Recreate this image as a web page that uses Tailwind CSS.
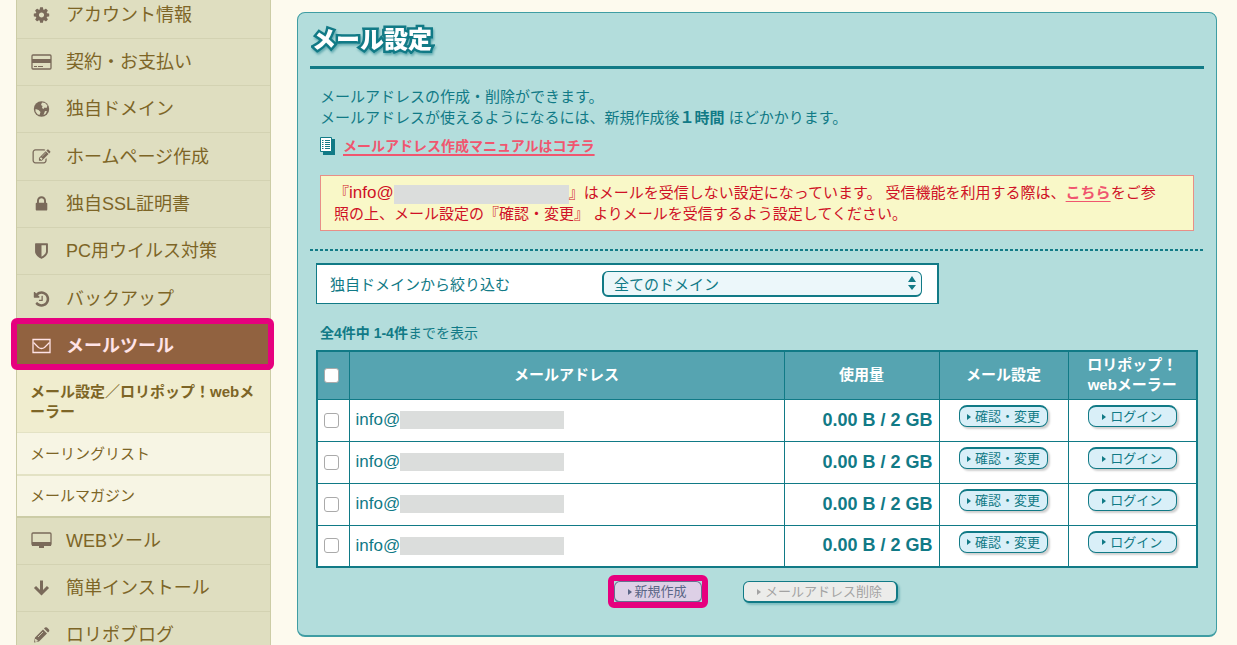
<!DOCTYPE html>
<html lang="ja">
<head>
    <meta charset="UTF-8">
    <meta name="viewport" content="width=device-width, initial-scale=1.0">
    <title>メール設定</title>
    <script src="https://cdn.jsdelivr.net/npm/@tailwindcss/browser@4"></script>
</head>
<body class="h-screen overflow-hidden bg-[#fdfaee] font-['Liberation_Sans','Noto_Sans_CJK_JP',sans-serif] text-[15px] text-[#117a86]">

<div class="flex items-start gap-[26px] pl-4 pr-5">

    <!-- Sidebar -->
    <nav class="-mt-2 w-[255px] shrink-0 border-x border-[#cccca6] bg-[#dfdec0] text-lg text-[#7d6526]">
        <a href="#" class="flex h-[47px] items-center gap-[14px] border-b border-[#d3d2b2] pl-[14px]">
            <svg class="h-[18px] w-[21px] shrink-0 fill-[#7a6a5a]" viewBox="0 0 1792 1792"><path d="M1152 896q0-106-75-181t-181-75-181 75-75 181 75 181 181 75 181-75 75-181zm512-109v222q0 12-8 23t-20 13l-185 28q-19 54-39 91 35 50 107 138 10 12 10 25t-9 23q-27 37-99 108t-94 71q-12 0-26-9l-138-108q-44 23-91 38-16 136-29 186-7 28-36 28h-222q-14 0-24.5-8.5t-11.5-21.5l-28-184q-49-16-90-37l-141 107q-10 9-25 9-14 0-25-11-126-114-165-168-7-10-7-23 0-12 8-23 15-21 51-66.5t54-70.5q-27-50-41-99l-183-27q-13-2-21-12.5t-8-23.5v-222q0-12 8-23t19-13l186-28q14-46 39-92-40-57-107-138-10-12-10-24 0-10 9-23 26-36 98.5-107.5t94.5-71.5q13 0 26 10l138 107q44-23 91-38 16-136 29-186 7-28 36-28h222q14 0 24.5 8.5t11.5 21.5l28 184q49 16 90 37l142-107q9-9 24-9 13 0 25 10 129 119 165 170 7 8 7 22 0 12-8 23-15 21-51 66.5t-54 70.5q26 50 41 98l183 28q13 2 21 12.5t8 23.5z"/></svg>
            アカウント情報
        </a>
        <a href="#" class="flex h-[47px] items-center gap-[14px] border-b border-[#d3d2b2] pl-[14px]">
            <svg class="h-[18px] w-[21px] shrink-0" viewBox="0 0 21 18"><rect x="1" y="2" width="19" height="14" rx="1" fill="none" stroke="#7a6a5a" stroke-width="1.3"/><path d="M1 6h19v4H1z" fill="#7a6a5a"/><path d="M3 13.5h3M7 13.5h5" stroke="#7a6a5a"/></svg>
            契約・お支払い
        </a>
        <a href="#" class="flex h-[47px] items-center gap-[14px] border-b border-[#d3d2b2] pl-[14px]">
            <svg class="h-[18px] w-[21px] shrink-0" viewBox="0 0 21 18"><circle cx="10.5" cy="9" r="7.7" fill="#7a6a5a"/><path d="M11 2.5l3 .5 2.5 2.5-1 2.5-2-.5-1 1.5-1.5-1 .5-2-1.5-1zM4.5 9l3 1 2 2-1 3-2-.8-2-2.7zM14 11l2 .3-1.5 2.7-2 1z" fill="#dfdec0"/></svg>
            独自ドメイン
        </a>
        <a href="#" class="flex h-12 items-center gap-[14px] border-b border-[#d3d2b2] pl-[14px]">
            <svg class="h-[18px] w-[21px] shrink-0 fill-[#7a6a5a]" viewBox="0 0 1792 1792"><path d="M888 1184l116-116-152-152-116 116v56h96v96h56zm440-720q-16-16-33 1l-350 350q-17 17-1 33t33-1l350-350q17-17 1-33zm80 594v190q0 119-84.5 203.5t-203.5 84.5h-832q-119 0-203.5-84.5t-84.5-203.5v-832q0-119 84.5-203.5t203.5-84.5h832q63 0 117 25 15 7 18 23 3 17-9 29l-49 49q-14 14-32 8-23-6-45-6h-832q-66 0-113 47t-47 113v832q0 66 47 113t113 47h832q66 0 113-47t47-113v-126q0-13 9-22l64-64q15-15 35-7t20 29zm-96-738l288 288-672 672h-288v-288zm444 132l-92 92-288-288 92-92q28-28 68-28t68 28l152 152q28 28 28 68t-28 68z"/></svg>
            ホームページ作成
        </a>
        <a href="#" class="flex h-[47px] items-center gap-[14px] border-b border-[#d3d2b2] pl-[14px]">
            <svg class="h-[18px] w-[21px] shrink-0 fill-[#7a6a5a]" viewBox="0 0 1792 1792"><path d="M640 768h512v-192q0-106-75-181t-181-75-181 75-75 181v192zm832 96v576q0 40-28 68t-68 28h-960q-40 0-68-28t-28-68v-576q0-40 28-68t68-28h32v-192q0-184 132-316t316-132 316 132 132 316v192h32q40 0 68 28t28 68z"/></svg>
            独自SSL証明書
        </a>
        <a href="#" class="flex h-[47px] items-center gap-[14px] border-b border-[#d3d2b2] pl-[14px]">
            <svg class="h-[18px] w-[21px] shrink-0 fill-[#7a6a5a]" viewBox="0 0 1792 1792"><path d="M1344 960v-640h-448v1137q119-63 213-137 235-184 235-360zm192-768v768q0 86-33.5 170.5t-83 150-118 127.5-126.5 103-121 77.5-89.5 49.5-42.5 20q-12 6-26 6t-26-6q-16-7-42.5-20t-89.5-49.5-121-77.5-126.5-103-118-127.5-83-150-33.5-170.5v-768q0-26 19-45t45-19h1152q26 0 45 19t19 45z"/></svg>
            PC用ウイルス対策
        </a>
        <a href="#" class="flex h-[47px] items-center gap-[14px] pl-[14px]">
            <svg class="h-[18px] w-[21px] shrink-0 fill-[#7a6a5a]" viewBox="0 0 1792 1792"><path d="M1664 896q0 156-61 298t-164 245-245 164-298 61q-172 0-327-72.5t-264-204.5q-7-10-6.5-22.5t8.5-20.5l137-138q10-9 25-9 16 2 23 12 73 95 179 147t225 52q104 0 198.5-40.5t163.5-109.5 109.5-163.5 40.5-198.5-40.5-198.5-109.5-163.5-163.5-109.5-198.5-40.5q-98 0-188 35.5t-160 101.5l137 138q31 30 14 69-17 40-59 40h-448q-26 0-45-19t-19-45v-448q0-42 40-59 39-17 69 14l130 129q107-101 244.5-156.5t284.5-55.5q156 0 298 61t245 164 164 245 61 298zm-640-288v448q0 14-9 23t-23 9h-320q-14 0-23-9t-9-23v-64q0-14 9-23t23-9h224v-352q0-14 9-23t23-9h64q14 0 23 9t9 23z"/></svg>
            バックアップ
        </a>

        <!-- Current section -->
        <a href="#" class="relative flex h-12 items-center gap-[14px] bg-[#916240] pl-[14px] font-bold text-[#ffe3e6]">
            <svg class="h-[18px] w-[21px] shrink-0" viewBox="0 0 21 18" fill="none" stroke="#ffe3e6" stroke-width="1.3"><path d="M2 2.5h17v13H2z"/><path d="M2.5 5.5l5 5q3 2 6 0l5-5"/></svg>
            メールツール
            <span class="absolute -top-1 -right-1 bottom-0 -left-[6px] rounded-md border-6 border-[#e6007e]"></span>
        </a>
        <div class="text-[15px]">
            <a href="#" class="block h-[63px] border-b border-[#e3e2c4] bg-[#f0edcf] py-3 pr-3 pl-[13px] leading-5 font-bold [line-break:anywhere]">メール設定／ロリポップ！webメーラー</a>
            <a href="#" class="flex h-[43px] items-center border-b-2 border-[#e3e2c4] bg-[#f7f5e4] pl-[13px]">メーリングリスト</a>
            <a href="#" class="flex h-[42px] items-center border-b-2 border-[#cccca6] bg-[#f7f5e4] pl-[13px]">メールマガジン</a>
        </div>

        <a href="#" class="flex h-[47px] items-center gap-[14px] border-b border-[#d3d2b2] pl-[14px]">
            <svg class="h-[18px] w-[21px] shrink-0" viewBox="0 0 21 18"><rect x="1" y="1" width="19" height="12" rx="1" fill="none" stroke="#7a6a5a" stroke-width="1.3"/><path d="M1 10h19v4H1zM8 14h5v2H8z" fill="#7a6a5a"/></svg>
            WEBツール
        </a>
        <a href="#" class="flex h-[47px] items-center gap-[14px] border-b border-[#d3d2b2] pl-[14px]">
            <svg class="h-[18px] w-[21px] shrink-0" viewBox="0 0 21 18" fill="none" stroke="#7a6a5a" stroke-width="3"><path d="M10.5 1.5v13M4 8l6.5 6.5L17 8"/></svg>
            簡単インストール
        </a>
        <a href="#" class="flex h-[47px] items-center gap-[14px] border-b border-[#d3d2b2] pl-[14px]">
            <svg class="h-[18px] w-[21px] shrink-0" viewBox="0 0 21 18"><path d="M3 16.5l1-5 8-8 4 4-8 8zM13 2.5l1-1q1-.7 2 0l2 2q.7 1 0 2l-1 1z" fill="#7a6a5a"/><path d="M4.5 13l2 2-2 .5zM7 11l5-5" fill="#dfdec0" stroke="#dfdec0" stroke-width=".8"/></svg>
            ロリポブログ
        </a>
    </nav>

    <!-- Main panel -->
    <main class="mt-3 min-w-0 flex-1 rounded-lg border border-b-2 border-[#3f9da3] bg-[#b3dddc] px-3 pb-8">
        <div class="border-b-3 border-[#117a86] pt-2 pb-2">
            <h1 class="pl-[2px] text-2xl leading-[37px] font-black text-white drop-shadow-[1px_2px_1px_#117a8680] [-webkit-text-stroke:5px_#117a86] [paint-order:stroke_fill]">メール設定</h1>
        </div>

        <div class="px-[10px] pt-[17px]">
            <p class="leading-[21px]">メールアドレスの作成・削除ができます。<br>メールアドレスが使えるようになるには、新規作成後<b>１時間</b> ほどかかります。</p>
            <p class="mt-2 flex items-center gap-2 leading-[22px]">
                <svg class="h-[18px] w-[15px] shrink-0" viewBox="0 0 15 18"><path d="M3 2h12v16H3z" fill="#117a86"/><path d="M.5.5h11v14H.5z" fill="#fff" stroke="#117a86"/><path d="M2 3.5h1.5M5 3.5h5M2 5.5h1.5M5 5.5h5M2 7.5h1.5M5 7.5h5M2 9.5h1.5M5 9.5h5M2 11.5h1.5M5 11.5h5" stroke="#117a86"/></svg>
                <a href="#" class="text-sm font-bold text-[#f0566f] underline decoration-2 underline-offset-3">メールアドレス作成マニュアルはコチラ</a>
            </p>
            <div class="mt-[19px] border border-[#e88f88] bg-[#f9f8c8] py-[6px] pr-[30px] pl-[13px] leading-[21px] text-[#cf1126]">
                『<span class="text-[17px] leading-none">info@</span><span class="-my-1 inline-block h-[19px] w-[175px] bg-[#dbdddc] align-middle"></span>』はメールを受信しない設定になっています。 受信機能を利用する際は、<a href="#" class="font-bold text-[#f0566f] underline underline-offset-3">こちら</a>をご参照の上、メール設定の『確認・変更』 よりメールを受信するよう設定してください。
            </div>
        </div>

        <div class="mt-[18px] h-[2px] bg-[repeating-linear-gradient(90deg,#117a86_0_3px,transparent_3px_5px)]"></div>

        <div class="px-[6px] pt-3">
            <form class="flex h-[41px] w-[623px] max-w-full items-center border-2 border-b border-l border-[#117a86] bg-white pr-[15px] pl-[13px]">
                <label for="domain" class="flex-1 pt-[2px]">独自ドメインから絞り込む</label>
                <div class="relative">
                    <select id="domain" class="block h-[26px] w-[320px] appearance-none rounded-md border border-b-2 border-l-2 border-[#117a86] bg-[#ecf7fa] pt-[2px] pl-[10px] text-[15px] leading-[21px]">
                        <option>全てのドメイン</option>
                    </select>
                    <svg class="pointer-events-none absolute top-[5px] right-[6px] h-[14px] w-[8px] fill-[#117a86]" viewBox="0 0 8 14"><path d="M4 0l4 6H0zM4 14l4-5H0z"/></svg>
                </div>
            </form>

            <p class="mt-[19px] pl-[4px] text-sm leading-5"><b>全4件中 1-4件</b>までを表示</p>

            <table class="mt-[7px] w-full table-fixed border-collapse border-2 border-[#117a86] bg-white">
                <thead>
                    <tr class="h-12 bg-[#56a4b1] leading-5 text-white">
                        <th class="w-8 border border-[#117a86] pr-[3px]"><input type="checkbox" aria-label="すべて選択" class="mx-auto block size-[15px] appearance-none rounded-[3px] border border-[#aaa] bg-white"></th>
                        <th class="border border-[#117a86]">メールアドレス</th>
                        <th class="w-[155px] border border-[#117a86]">使用量</th>
                        <th class="w-[129px] border border-[#117a86]">メール設定</th>
                        <th class="w-[129px] border border-[#117a86]">ロリポップ！<br>webメーラー</th>
                    </tr>
                </thead>
                <tbody id="accounts"></tbody>
            </table>
        </div>

        <div class="mt-[13px] flex items-start justify-center gap-[41px] pr-[3px]">
            <button type="button" class="relative flex h-[22px] w-[88px] items-center justify-center gap-[2px] rounded-md border border-b-2 border-[#66708f] bg-[#ddd0e6] text-[13px] text-[#5b6687]">
                <svg class="h-[6px] w-[4px] fill-current" viewBox="0 0 4 6"><path d="M0 0l4 3-4 3z"/></svg>新規作成
                <span class="absolute -inset-[7px] rounded-md border-6 border-[#e6007e]"></span>
            </button>
            <button type="button" class="flex h-[22px] w-[155px] items-center justify-center gap-[4px] rounded-md border border-r-2 border-b-2 border-[#117a86] bg-[#ececea] text-[13px] text-[#a3a3a3] shadow-[2px_2px_2px_#117a8650]">
                <svg class="h-[6px] w-[4px] fill-current" viewBox="0 0 4 6"><path d="M0 0l4 3-4 3z"/></svg>メールアドレス削除
            </button>
        </div>
    </main>
</div>

<script>
    const arrow = '<svg class="h-[6px] w-[4px] fill-current" viewBox="0 0 4 6"><path d="M0 0l4 3-4 3z"/></svg>';
    const button = 'mx-auto mb-2 flex h-[22px] w-[89px] items-center justify-center gap-[4px] rounded-lg border border-t-2 border-[#117a86] bg-[#d9eff8] text-[13px] shadow-[2px_2px_2px_#00000030]';

    // One row per mailbox
    document.getElementById('accounts').innerHTML = [1, 2, 3, 4].map((n) => `
        <tr class="h-[42px]">
            <td class="border border-[#117a86] pr-[3px]"><input type="checkbox" aria-label="メールアドレス${n}" class="mx-auto block size-[15px] appearance-none rounded-[3px] border border-[#aaa] bg-white"></td>
            <td class="border border-[#117a86] pl-[6px]"><div class="flex items-center text-[17px]">info@<span class="h-[18px] w-[164px] bg-[#dbdddc]"></span></div></td>
            <td class="border border-[#117a86] pr-[6px] text-right text-[18px] font-bold">0.00 B / 2 GB</td>
            <td class="border border-[#117a86]"><button type="button" class="${button}">${arrow}確認・変更</button></td>
            <td class="border border-[#117a86]"><button type="button" class="${button}">${arrow}ログイン</button></td>
        </tr>`).join('');
</script>
</body>
</html>
